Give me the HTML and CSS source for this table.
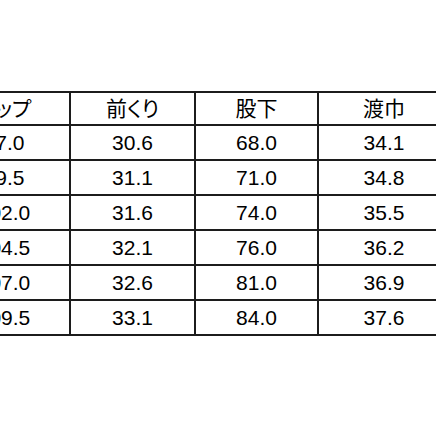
FILE: index.html
```html
<!DOCTYPE html>
<html lang="ja">
<head>
<meta charset="utf-8">
<link rel="stylesheet" href="styles.css">
</head>
<body>
<div class="frame">
<table class="size-table">
  <colgroup>
    <col class="c1"><col class="c2"><col class="c3"><col class="c4">
  </colgroup>
  <thead>
    <tr><th>ヒップ</th><th>前くり</th><th>股下</th><th>渡巾</th></tr>
  </thead>
  <tbody>
    <tr><td>97.0</td><td>30.6</td><td>68.0</td><td>34.1</td></tr>
    <tr><td>99.5</td><td>31.1</td><td>71.0</td><td>34.8</td></tr>
    <tr><td>102.0</td><td>31.6</td><td>74.0</td><td>35.5</td></tr>
    <tr><td>104.5</td><td>32.1</td><td>76.0</td><td>36.2</td></tr>
    <tr><td>107.0</td><td>32.6</td><td>81.0</td><td>36.9</td></tr>
    <tr><td>109.5</td><td>33.1</td><td>84.0</td><td>37.6</td></tr>
  </tbody>
</table>
</div>
</body>
</html>
```

FILE: styles.css
```css
html, body {
  margin: 0;
  padding: 0;
  background: #ffffff;
  overflow: hidden;
}

.frame {
  padding-top: 91px;
  width: 436px;
  height: 436px;
  box-sizing: border-box;
  overflow: hidden;
}

.size-table {
  margin-left: -63px;
  border-collapse: collapse;
  table-layout: fixed;
  width: 520px;
  font-family: "Liberation Sans", "Noto Sans CJK JP", sans-serif;
  color: #000000;
}

.c1 { width: 132px; }
.c2 { width: 125px; }
.c3 { width: 123px; }
.c4 { width: 140px; }

.size-table th,
.size-table td {
  border: 2px solid #1c1c1c;
  text-align: center;
  padding: 0;
}

.size-table th {
  height: 31px;
  font-weight: normal;
  font-size: 21px;
  font-feature-settings: "palt";
  line-height: 1;
}

.size-table td {
  height: 33px;
  font-size: 21px;
  line-height: 1;
}

.size-table td:last-child,
.size-table th:last-child {
  padding-right: 8px;
}
```
